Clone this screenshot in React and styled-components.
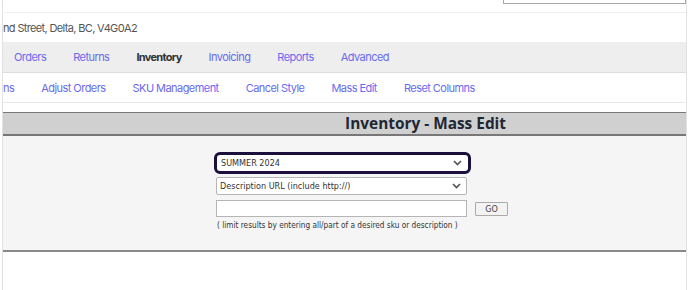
import React from 'react';
import styled, { createGlobalStyle } from 'styled-components';

const GlobalStyle = createGlobalStyle`
  html, body {
    margin: 0;
    padding: 0;
    background: #ffffff;
    overflow: hidden;
  }
  body {
    font-family: Inter, "Noto Sans", sans-serif;
  }
`;

const Page = styled.div`
  margin-left: 2px;
  width: 685px;
  height: 290px;
  border-left: 1px solid #e2e2e2;
  border-right: 1px solid #e2e2e2;
  box-sizing: border-box;
  overflow: hidden;
`;

const TopRow = styled.div`
  height: 12px;
  display: flex;
  justify-content: flex-end;
  border-bottom: 1px solid #efefef;
`;

const SearchBox = styled.input`
  width: 183px;
  height: 20px;
  margin-top: -16px;
  border: 1px solid #aaaaaa;
  box-sizing: border-box;
  background: #fff;
`;

const AddressRow = styled.div`
  height: 29px;
  display: flex;
  align-items: center;
  font-size: 11px;
  letter-spacing: -0.65px;
  color: #555;
`;

const NavBar = styled.nav`
  height: ${(p) => (p.shaded ? 30 : 29)}px;
  display: flex;
  align-items: center;
  background: ${(p) => (p.shaded ? '#eeeeee' : '#ffffff')};
  border-bottom: 1px solid ${(p) => (p.shaded ? '#dddddd' : '#e9e9e9')};
  padding-left: ${(p) => p.offset}px;
  white-space: nowrap;
`;

const NavItem = styled.a`
  font-size: 11px;
  letter-spacing: ${(p) => (p.active ? -0.7 : -0.55)}px;
  color: ${(p) => (p.active ? '#333333' : '#6a6aee')};
  font-weight: ${(p) => (p.active ? 700 : 400)};
  padding: 0 13.5px;
  text-decoration: none;
  &:first-child {
    padding-left: 0;
  }
`;

const Spacer = styled.div`
  height: 9px;
`;

const TitleBar = styled.div`
  height: 24px;
  box-sizing: border-box;
  background: #d0d0d0;
  border-top: 1px solid #7a7a7a;
  border-bottom: 2px solid #777777;
  display: flex;
  align-items: center;
  justify-content: flex-end;
  padding-right: 180px;
`;

const Title = styled.h1`
  margin: 0;
  font-family: "Open Sans", sans-serif;
  font-size: 15.4px;
  font-weight: 700;
  color: #1f2733;
`;

const Content = styled.div`
  height: 116px;
  background: #f5f5f5;
  border-bottom: 2px solid #8a8a8a;
  padding: 16px 0 0 211px;
  box-sizing: border-box;
  font-family: "DejaVu Sans Condensed", "DejaVu Sans", sans-serif;
`;

const Field = styled.div`
  position: relative;
  width: ${(p) => (p.focused ? 257 : 251)}px;
  margin-left: ${(p) => (p.focused ? 0 : 2)}px;
  margin-bottom: ${(p) => (p.focused ? 3 : 5)}px;
`;

const Select = styled.select`
  appearance: none;
  display: block;
  width: 100%;
  height: ${(p) => (p.focused ? 22 : 18)}px;
  box-sizing: border-box;
  font-family: inherit;
  font-size: 9px;
  color: #333;
  background: #fff;
  padding: 0 0 0 ${(p) => (p.focused ? 4 : 3)}px;
  border: ${(p) => (p.focused ? '3px solid #1b0f3c' : '1px solid #b5b5b5')};
  border-radius: ${(p) => (p.focused ? 6 : 2)}px;
  outline: none;
`;

const Chevron = styled.svg`
  position: absolute;
  right: ${(p) => (p.focused ? 9 : 6)}px;
  top: 50%;
  transform: translateY(-50%);
  pointer-events: none;
`;

const SearchRow = styled.div`
  display: flex;
  align-items: flex-start;
  gap: 8px;
  margin-left: 2px;
`;

const TextInput = styled.input`
  width: 251px;
  height: 17px;
  box-sizing: border-box;
  border: 1px solid #b5b5b5;
  background: #fff;
`;

const GoButton = styled.button`
  width: 33px;
  height: 14px;
  padding: 0;
  font-family: inherit;
  font-size: 9px;
  color: #444;
  background: #f3f3f3;
  border: 1px solid #aaaaaa;
  border-radius: 1px;
  margin-top: 2px;
`;

const Hint = styled.div`
  margin: 3px 0 0 3px;
  font-size: 8.2px;
  color: #333;
  white-space: nowrap;
`;

const mainNav = ['Orders', 'Returns', 'Inventory', 'Invoicing', 'Reports', 'Advanced'];
const subNav = ['ns', 'Adjust Orders', 'SKU Management', 'Cancel Style', 'Mass Edit', 'Reset Columns'];

const Arrow = ({ focused }) => (
  <Chevron focused={focused} width="9" height="6" viewBox="0 0 9 6">
    <polyline points="1,1 4.5,4.5 8,1" fill="none" stroke="#555" strokeWidth="1.7" />
  </Chevron>
);

export default function App() {
  return (
    <>
      <GlobalStyle />
      <Page>
        <TopRow>
          <SearchBox />
        </TopRow>
        <AddressRow>nd Street, Delta, BC, V4G0A2</AddressRow>
        <NavBar shaded offset={11}>
          {mainNav.map((item) => (
            <NavItem key={item} active={item === 'Inventory'}>{item}</NavItem>
          ))}
        </NavBar>
        <NavBar offset={0}>
          {subNav.map((item) => (
            <NavItem key={item}>{item}</NavItem>
          ))}
        </NavBar>
        <Spacer />
        <TitleBar>
          <Title>Inventory - Mass Edit</Title>
        </TitleBar>
        <Content>
          <Field focused>
            <Select focused defaultValue="SUMMER 2024">
              <option>SUMMER 2024</option>
            </Select>
            <Arrow focused />
          </Field>
          <Field>
            <Select defaultValue="Description URL (include http://)">
              <option>Description URL (include http://)</option>
            </Select>
            <Arrow />
          </Field>
          <SearchRow>
            <TextInput />
            <GoButton>GO</GoButton>
          </SearchRow>
          <Hint>( limit results by entering all/part of a desired sku or description )</Hint>
        </Content>
      </Page>
    </>
  );
}
